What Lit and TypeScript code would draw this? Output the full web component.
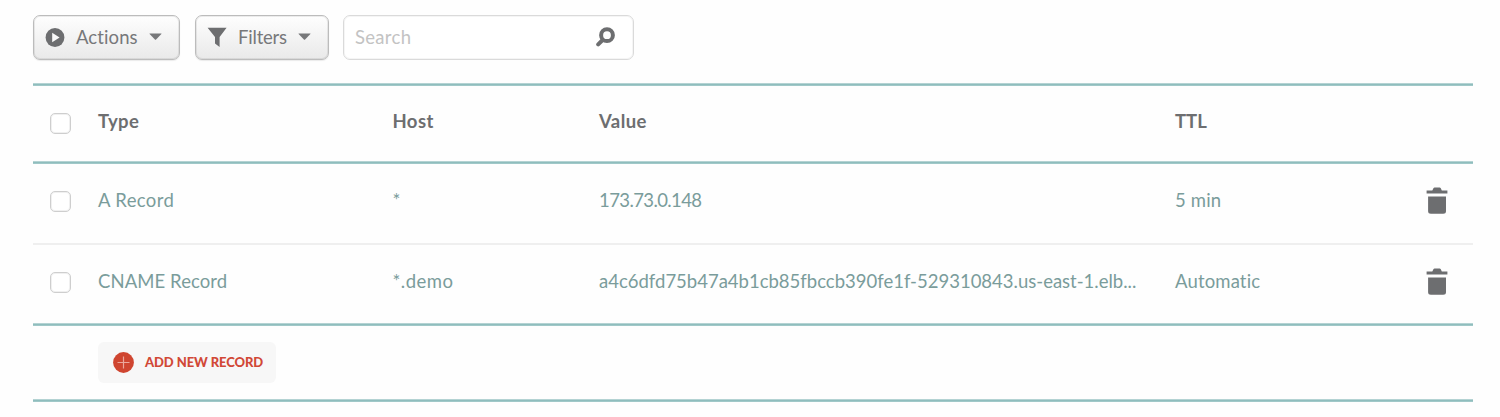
import { LitElement, html, css, svg } from "lit";
import { customElement, property } from "lit/decorators.js";

const trash = svg`<svg class="trash" width="22" height="28" viewBox="0 0 22 28"><path fill="#6d6e70" d="M1 3.4H6.3L7.4 1.2Q7.8.6 8.6.6H13.6Q14.4.6 14.8 1.2L15.8 3.4H21.4V6.4H.6V3.4ZM2.1 9.4H20V24.2Q20 26.7 17.2 26.7H4.9Q2.1 26.7 2.1 24.2Z"/></svg>`;

interface RecordRow {
  type: string;
  host: string;
  value: string;
  ttl: string;
  cls: string;
}

const RECORDS: RecordRow[] = [
  { type: "A Record", host: "*", value: "173.73.0.148", ttl: "5 min", cls: "a" },
  { type: "CNAME Record", host: "*.demo", value: "a4c6dfd75b47a4b1cb85fbccb390fe1f-529310843.us-east-1.elb...", ttl: "Automatic", cls: "cname" },
];

@customElement("record-toolbar")
export class RecordToolbar extends LitElement {
  static styles = css`
    :host { display: flex; height: 45px; font-variant-ligatures: none; }
    .btn {
      box-sizing: border-box; display: flex; align-items: center; height: 45px; padding: 0 0 2px 11px;
      border: 1px solid #bcbcbc; border-radius: 7px; margin-right: 15px;
      background: linear-gradient(#fefefe, #e9e9e9);
      box-shadow: inset 0 0 0 1px rgba(0, 0, 0, .07), 0 1px 1px rgba(0, 0, 0, .08);
      font: 400 18.5px Lato, sans-serif; color: #77787a;
    }
    .actions { width: 147px; letter-spacing: .1px; }
    .filters { width: 134px; margin-right: 14px; }
    .filters .label { letter-spacing: -.2px; }
    .label, .caret { margin-left: 11px; }
    .search {
      box-sizing: border-box; display: flex; align-items: center; justify-content: space-between;
      width: 291px; height: 45px; padding: 0 17px 2px 11px;
      border: 1px solid #dadada; border-radius: 7px; background: #fff;
      box-shadow: inset 0 0 0 1px rgba(0, 0, 0, .04);
      font: 400 18.5px Lato, sans-serif; letter-spacing: .3px; color: #c3c3c3;
    }
  `;
  render() {
    const caret = svg`<svg class="caret" width="13" height="7" viewBox="0 0 13 7"><path fill="#77787a" d="M.8.4H12.2Q12.8.4 12.4 1L7.1 6.4Q6.5 7 5.9 6.4L.6 1Q.2.4.8.4Z"/></svg>`;
    return html`
      <div class="btn actions">
        <svg width="20" height="20" viewBox="0 0 20 20"><circle cx="10" cy="10.5" r="9.4" fill="#6d6e70"/><path fill="#fafafa" d="M7.2 5.8L14.6 10.5L7.2 15.2Z"/></svg>
        <span class="label">Actions</span>${caret}
      </div>
      <div class="btn filters">
        <svg width="20" height="20" viewBox="0 0 20 20"><path fill="#6d6e70" d="M.6.8H19.6L12.6 10V20L8 16.6V10Z"/></svg>
        <span class="label">Filters</span>${caret}
      </div>
      <div class="search">
        <span class="placeholder">Search</span>
        <svg width="21" height="21" viewBox="0 0 21 21"><circle cx="12" cy="9.2" r="5.9" fill="none" stroke="#6d6e70" stroke-width="4"/><path d="M7.6 14L3.2 18.4" stroke="#6d6e70" stroke-width="4" stroke-linecap="round"/></svg>
      </div>
    `;
  }
}

@customElement("record-table")
export class RecordTable extends LitElement {
  @property({ attribute: false }) rows: RecordRow[] = [];

  static styles = css`
    :host { display: block; font: 400 18.5px Lato, sans-serif; font-variant-ligatures: none; color: #7a9c9b; }
    .rule { height: 3px; background: linear-gradient(#b4d3d3 1px, #8fbdbd 1px 2px, #a0c8c8 2px); }
    .divider { height: 2px; background: #efefef; }
    .row {
      display: grid; grid-template-columns: 65px 294.5px 206.5px 576px 1fr auto; align-items: center;
      box-sizing: border-box; height: 79px; padding-bottom: 4px;
    }
    .cname { height: 78px; padding-bottom: 3px; }
    .head { height: 75px; padding-bottom: 0; font-weight: 700; letter-spacing: .4px; color: #6d6e70; }
    .text { white-space: nowrap; padding-bottom: 3px; }
    .head .text { padding-bottom: 6px; }
    .head .text:last-child { letter-spacing: 0; }
    .a .type { letter-spacing: .35px; }
    .a .value { letter-spacing: -.6px; }
    .host { letter-spacing: .5px; }
    .ttl { letter-spacing: .15px; }
    .cname .type { letter-spacing: .08px; }
    .box { box-sizing: border-box; width: 21px; height: 21px; margin-left: 17px; border: 1px solid #cecece; border-radius: 5px; background: #fff; box-shadow: inset 0 0 0 1px rgba(0, 0, 0, .06); }
    .trash { display: block; margin: 0 25.5px 1px 0; }
    .footer { display: flex; align-items: center; box-sizing: border-box; height: 73px; }
    .add {
      display: flex; align-items: center; box-sizing: border-box; width: 178px; height: 41px;
      margin-left: 65px; padding-left: 15px; border-radius: 6px; background: #f7f7f7;
      font-size: 13px; font-weight: 900; letter-spacing: -.08px; color: #d14836; white-space: nowrap;
    }
    .addlabel { margin-left: 11px; padding-bottom: 1px; }
  `;
  render() {
    return html`
      <div class="rule"></div>
      <div class="row head">
        <span class="box"></span><span class="text">Type</span><span class="text">Host</span><span class="text">Value</span><span class="text">TTL</span>
      </div>
      <div class="rule"></div>
      ${this.rows.map((r, i) => html`
        ${i ? html`<div class="divider"></div>` : ""}
        <div class="row ${r.cls}">
          <span class="box"></span><span class="text type">${r.type}</span><span class="text host">${r.host}</span><span class="text value">${r.value}</span><span class="text ttl">${r.ttl}</span>${trash}
        </div>`)}
      <div class="rule"></div>
      <div class="footer">
        <div class="add">
          <svg width="21" height="21" viewBox="0 0 21 21"><circle cx="10.5" cy="10.5" r="10.4" fill="#cf4530"/><path d="M4.5 10.5H16.5M10.5 4.5V16.5" stroke="#eba79c" stroke-width="1.2"/></svg>
          <span class="addlabel">ADD NEW RECORD</span>
        </div>
      </div>
      <div class="rule"></div>
    `;
  }
}

@customElement("app-root")
export class AppRoot extends LitElement {
  static styles = css`
    :host { display: block; box-sizing: border-box; height: 417px; padding: 15px 27px 0 33px; background: #fefefe; overflow: hidden; }
    .table { margin-top: 23px; }
  `;
  render() {
    return html`<record-toolbar></record-toolbar><record-table class="table" .rows=${RECORDS}></record-table>`;
  }
}
